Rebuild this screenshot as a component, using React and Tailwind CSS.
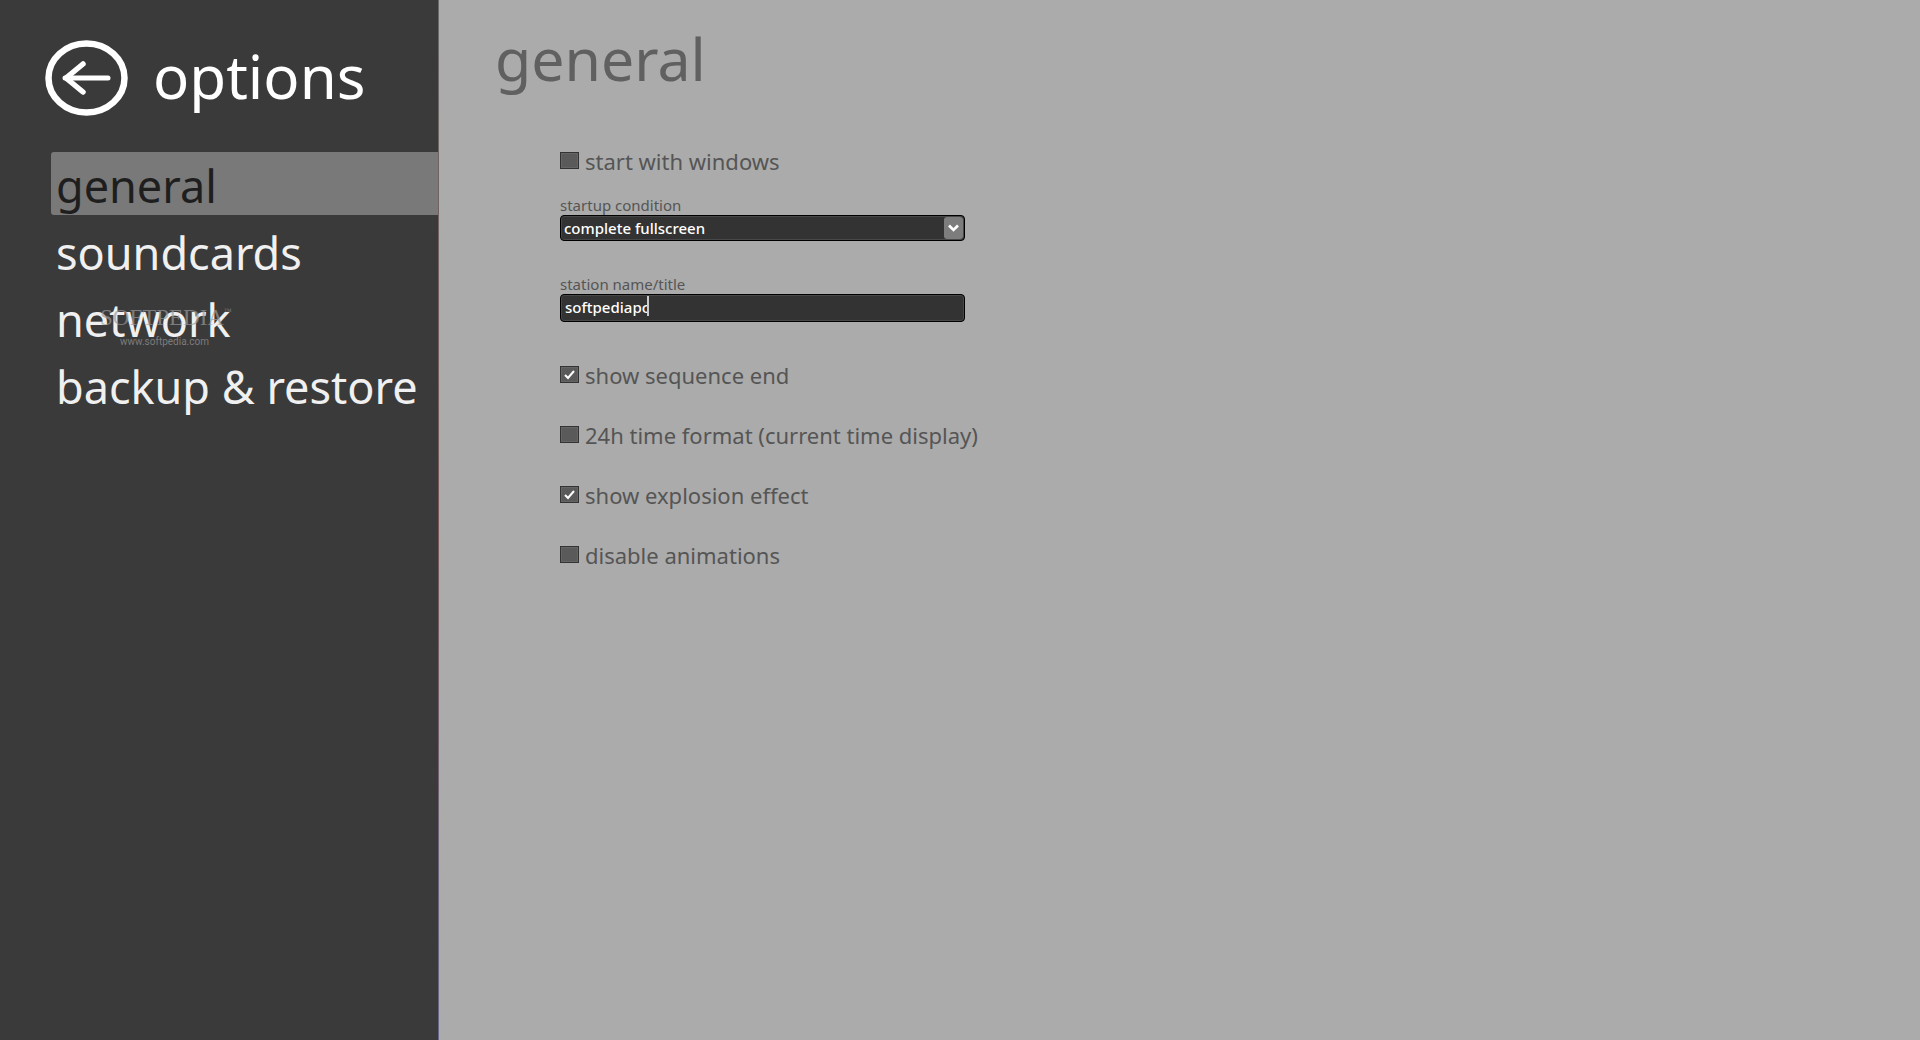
// Options Page
import React from "react";

const sections = ["general", "soundcards", "network", "backup & restore"];

const startupConditions = ["complete fullscreen", "maximized window", "normal window"];

function BackButton() {
  return (
    <button type="button" aria-label="back" className="shrink-0">
      <svg width="84" height="76" viewBox="0 0 84 76" fill="none" stroke="white">
        <ellipse cx="41.5" cy="38" rx="38" ry="34.5" strokeWidth="6.5" />
        <path d="M63 38H20" strokeWidth="5" strokeLinecap="round" />
        <path d="M38 24L21 38L38 52" strokeWidth="5.5" strokeLinecap="round" strokeLinejoin="round" />
      </svg>
    </button>
  );
}

function Watermark() {
  return (
    <div className="absolute top-[306px] left-[100px] flex flex-col text-[#9a9a9a]/70 pointer-events-none">
      <div className="flex items-start font-['Liberation_Serif',serif] text-[23px] leading-6">
        SOFTPEDIA<span className="text-[8px] leading-3">™</span>
      </div>
      <span className="pl-5 font-[Roboto,sans-serif] text-[10px] leading-6">www.softpedia.com</span>
    </div>
  );
}

function CheckOption({ name, label, checked, onChange }) {
  return (
    <label className="flex items-center gap-[6px] h-7 text-[22px] leading-7">
      <span className="relative mb-[1px] flex h-[17px] w-[19px]">
        <input
          type="checkbox"
          name={name}
          checked={checked}
          onChange={onChange}
          className="appearance-none h-[17px] w-[19px] border border-[#333] bg-[#5a5a5a] shadow-[inset_0_0_0_1px_#656565]"
        />
        {checked && (
          <svg className="absolute inset-0 pointer-events-none" width="19" height="17" viewBox="0 0 19 17" fill="none" stroke="white" strokeWidth="2">
            <path d="M5 9L8 12L14 5" />
          </svg>
        )}
      </span>
      {label}
    </label>
  );
}

export default function Options() {
  const [section, setSection] = React.useState("general");
  const [settings, setSettings] = React.useState({
    startWithWindows: false,
    startup: "complete fullscreen",
    station: "softpediapc",
    sequenceEnd: true,
    time24h: false,
    explosion: true,
    noAnimations: false,
  });

  function handleChange(e) {
    const { name, type, value, checked } = e.target;
    setSettings(s => ({ ...s, [name]: type === "checkbox" ? checked : value }));
  }

  return (
    <div className="flex min-h-screen bg-[#ababab] font-['Noto_Sans','Open_Sans',sans-serif]">
      {/* Sidebar */}
      <aside className="relative w-[438px] shrink-0 bg-[#3a3a3a] pt-10">
        <div className="flex items-center gap-6 pl-[45px] text-white">
          <BackButton />
          <h1 className="pb-1 text-[60px] leading-[72px]">options</h1>
        </div>
        <nav className="mt-9 ml-[51px] flex flex-col gap-1">
          {sections.map(s => (
            <button
              key={s}
              type="button"
              onClick={() => setSection(s)}
              className={
                "h-[63px] rounded-l-[3px] pl-[5px] pt-1 text-left text-[45px] leading-[56px] whitespace-nowrap " +
                (s === section ? "bg-[#797979] text-[#1e1e1e]" : "text-[#f0f0f0]")
              }
            >
              {s}
            </button>
          ))}
        </nav>
        <Watermark />
      </aside>
      <div className="w-px bg-linear-to-b from-[#6a6a6a] via-[#7a5555] to-[#66668a]" />

      {/* Settings */}
      <main className="flex-1 pt-5 pl-14 text-[#555]">
        <h2 className="text-[59px] leading-[76px] text-[#606060]">{section}</h2>
        <form className="mt-[51px] ml-[65px] flex flex-col items-start">
          <CheckOption name="startWithWindows" label="start with windows" checked={settings.startWithWindows} onChange={handleChange} />

          <label htmlFor="startup" className="mt-[22px] text-[15px] leading-4">startup condition</label>
          <div className="relative mt-[2px] w-[405px]">
            <select
              id="startup"
              name="startup"
              value={settings.startup}
              onChange={handleChange}
              className="appearance-none block h-[26px] w-full rounded-[4px] border border-black bg-[#333] pl-[3px] text-[15px] leading-5 font-medium text-white shadow-[inset_0_0_0_1px_#484848]"
            >
              {startupConditions.map(c => (
                <option key={c}>{c}</option>
              ))}
            </select>
            <span className="absolute top-[2px] right-[2px] flex h-[22px] w-[19px] items-center justify-center rounded-[3px] bg-[#7d7d7d] pointer-events-none">
              <svg width="11" height="8" viewBox="0 0 11 8" fill="none" stroke="white" strokeWidth="2.6">
                <path d="M1 1.5L5.5 6L10 1.5" />
              </svg>
            </span>
          </div>

          <label htmlFor="station" className="mt-[35px] text-[15px] leading-4">station name/title</label>
          <div className="relative mt-[2px] w-[405px]">
            <input
              id="station"
              name="station"
              value={settings.station}
              onChange={handleChange}
              className="block h-7 w-full rounded-[4px] border border-black bg-[#333] px-1 pb-[2px] text-[15px] leading-5 font-medium text-white shadow-[inset_0_0_0_1px_#484848]"
            />
            <span className="absolute top-[2px] left-[87px] h-5 w-[2px] bg-[#ccc]" />
          </div>

          <div className="mt-[39px] flex flex-col gap-8">
            <CheckOption name="sequenceEnd" label="show sequence end" checked={settings.sequenceEnd} onChange={handleChange} />
            <CheckOption name="time24h" label="24h time format (current time display)" checked={settings.time24h} onChange={handleChange} />
            <CheckOption name="explosion" label="show explosion effect" checked={settings.explosion} onChange={handleChange} />
            <CheckOption name="noAnimations" label="disable animations" checked={settings.noAnimations} onChange={handleChange} />
          </div>
        </form>
      </main>
    </div>
  );
}
